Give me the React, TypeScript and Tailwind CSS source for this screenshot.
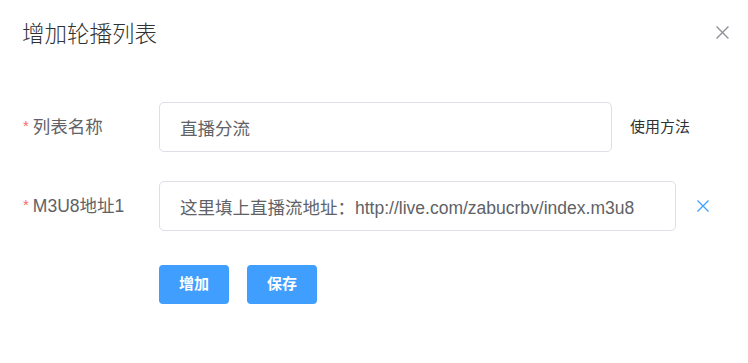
const FONT = { fontFamily: '"Liberation Sans", Arial, "Noto Sans CJK SC", sans-serif' };

function CloseIcon({ color, size }: { color: string; size: number }) {
  return (
    <svg width={size} height={size} viewBox="0 0 12 12" fill="none">
      <path d="M0.5 0.5L11.5 11.5M11.5 0.5L0.5 11.5" stroke={color} strokeWidth="1.3" />
    </svg>
  );
}

function Label({ text }: { text: string }) {
  return (
    <div className="w-[136px] shrink-0 flex items-center text-[17.5px] text-[#606266]">
      <span className="text-[#F56C6C] text-[15px] mr-[4px] -mt-[2px]">*</span>
      <span>{text}</span>
    </div>
  );
}

export default function App() {
  return (
    <div className="relative w-[748px] h-[363px] bg-white overflow-hidden" style={FONT}>
      <div className="px-[22px] pt-[20px]">
        <h2 className="text-[22.5px] leading-[30px] font-light text-[#303133]">增加轮播列表</h2>
      </div>
      <button type="button" className="absolute top-[26px] right-[19px]" aria-label="Close">
        <CloseIcon color="#909399" size={13} />
      </button>

      <form className="px-[23px] mt-[52px]">
        <div className="flex items-center h-[50px]">
          <Label text="列表名称" />
          <input
            readOnly
            value="直播分流"
            className="w-[453px] h-[50px] rounded-[5px] border border-[#DCDFE6] px-[20px] text-[17.5px] text-[#606266] outline-none"
          />
          <span className="ml-[18px] text-[15px] text-[#303133]">使用方法</span>
        </div>

        <div className="flex items-center h-[50px] mt-[29px]">
          <Label text="M3U8地址1" />
          <input
            readOnly
            value="这里填上直播流地址：http://live.com/zabucrbv/index.m3u8"
            className="w-[517px] h-[50px] rounded-[5px] border border-[#DCDFE6] px-[20px] text-[17.5px] text-[#606266] outline-none"
          />
          <button type="button" className="ml-[21px]" aria-label="Remove">
            <CloseIcon color="#409EFF" size={12} />
          </button>
        </div>

        <div className="flex gap-[18px] ml-[136px] mt-[34px]">
          <button type="button" className="w-[70px] h-[39px] rounded-[4px] bg-[#409EFF] text-white text-[15px] font-bold">
            增加
          </button>
          <button type="button" className="w-[70px] h-[39px] rounded-[4px] bg-[#409EFF] text-white text-[15px] font-bold">
            保存
          </button>
        </div>
      </form>
    </div>
  );
}
